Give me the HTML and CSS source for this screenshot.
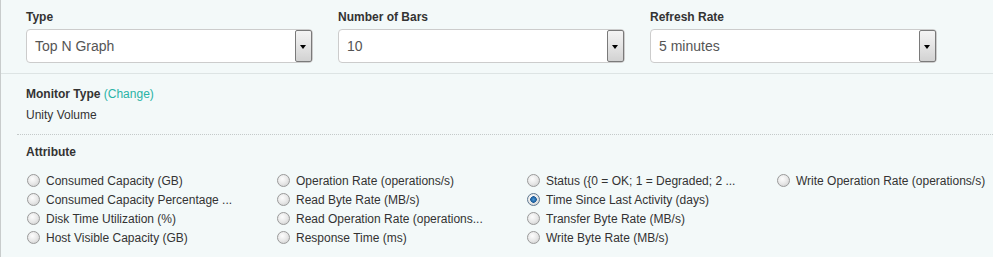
FILE: index.html
```html
<!DOCTYPE html>
<html lang="en">
<head>
    <meta charset="UTF-8">
    <title>Top N Graph Settings</title>
    <link rel="stylesheet" href="styles.css">
</head>
<body>

<div class="widget-settings">

    <!-- Graph options -->
    <div class="settings-row">
        <div class="field">
            <label>Type</label>
            <div class="select-box">
                <span class="select-value">Top N Graph</span>
                <span class="select-arrow"></span>
            </div>
        </div>
        <div class="field">
            <label>Number of Bars</label>
            <div class="select-box">
                <span class="select-value">10</span>
                <span class="select-arrow"></span>
            </div>
        </div>
        <div class="field">
            <label>Refresh Rate</label>
            <div class="select-box">
                <span class="select-value">5 minutes</span>
                <span class="select-arrow"></span>
            </div>
        </div>
    </div>

    <!-- Monitor -->
    <div class="monitor-section">
        <div class="monitor-info">
            <p class="section-title">Monitor Type <a href="#" class="change-link">(Change)</a></p>
            <p class="monitor-name">Unity Volume</p>
        </div>

        <div class="attribute-section">
            <p class="section-title">Attribute</p>
            <div class="attribute-grid">
                <label class="radio-item"><input type="radio" name="attr"><span>Consumed Capacity (GB)</span></label>
                <label class="radio-item"><input type="radio" name="attr"><span>Operation Rate (operations/s)</span></label>
                <label class="radio-item"><input type="radio" name="attr"><span>Status ({0 = OK; 1 = Degraded; 2 ...</span></label>
                <label class="radio-item"><input type="radio" name="attr"><span>Write Operation Rate (operations/s)</span></label>

                <label class="radio-item"><input type="radio" name="attr"><span>Consumed Capacity Percentage ...</span></label>
                <label class="radio-item"><input type="radio" name="attr"><span>Read Byte Rate (MB/s)</span></label>
                <label class="radio-item"><input type="radio" name="attr" checked><span>Time Since Last Activity (days)</span></label>
                <div></div>

                <label class="radio-item"><input type="radio" name="attr"><span>Disk Time Utilization (%)</span></label>
                <label class="radio-item"><input type="radio" name="attr"><span>Read Operation Rate (operations...</span></label>
                <label class="radio-item"><input type="radio" name="attr"><span>Transfer Byte Rate (MB/s)</span></label>
                <div></div>

                <label class="radio-item"><input type="radio" name="attr"><span>Host Visible Capacity (GB)</span></label>
                <label class="radio-item"><input type="radio" name="attr"><span>Response Time (ms)</span></label>
                <label class="radio-item"><input type="radio" name="attr"><span>Write Byte Rate (MB/s)</span></label>
                <div></div>
            </div>
        </div>
    </div>

</div>

</body>
</html>
```

FILE: styles.css
```css
* {
    margin: 0;
    padding: 0;
    box-sizing: border-box;
}

body {
    font-family: "Liberation Sans", Arial, sans-serif;
    font-size: 12px;
    color: #333;
    background-color: #f3f9f9;
    height: 100vh;
    overflow: hidden;
}

.widget-settings {
    border-left: 1px solid #c8cccc;
    min-height: 100vh;
}

/* Top row of selects */
.settings-row {
    display: flex;
    gap: 25px;
    padding: 9px 0 10px 25px;
    border-bottom: 1px solid #dde4e4;
}

.field {
    width: 287px;
}

.field label {
    display: block;
    font-weight: bold;
    line-height: 16px;
    margin-bottom: 4px;
}

.select-box {
    display: flex;
    align-items: center;
    justify-content: space-between;
    height: 34px;
    background-color: #fff;
    border: 1px solid #ccc;
    border-radius: 4px;
    padding: 0 0 0 8px;
}

.select-value {
    font-size: 14px;
    color: #555;
}

.select-arrow {
    position: relative;
    width: 17px;
    height: 32px;
    border: 1px solid #7a7a7a;
    border-radius: 2px;
    background: linear-gradient(to bottom, #f4f4f4 0%, #e6e6e6 45%, #d2d2d2 100%);
}

.select-arrow::after {
    content: "";
    position: absolute;
    left: 4px;
    top: 14px;
    border-left: 3.5px solid transparent;
    border-right: 3.5px solid transparent;
    border-top: 4px solid #000;
}

/* Monitor section */
.monitor-section {
    padding: 0 0 0 16px;
}

.monitor-info {
    padding: 12px 0 11px 9px;
    border-bottom: 1px dotted #c4caca;
}

.section-title {
    font-weight: bold;
    line-height: 16px;
}

.change-link {
    font-weight: normal;
    color: #2ab3a6;
    text-decoration: none;
}

.monitor-name {
    line-height: 16px;
    margin-top: 5px;
}

.attribute-section {
    padding: 9px 0 0 9px;
}

.attribute-grid {
    display: grid;
    grid-template-columns: repeat(4, 250px);
    grid-auto-rows: 19px;
    margin-top: 11px;
}

.radio-item {
    display: flex;
    align-items: center;
    gap: 6px;
    white-space: nowrap;
    color: #333;
}

.radio-item input {
    appearance: none;
    -webkit-appearance: none;
    width: 13px;
    height: 13px;
    margin-left: 1px;
    border-radius: 50%;
    border: 1px solid #9a9a9a;
    background: radial-gradient(circle at 40% 35%, #fdfdfd 0%, #e8e8e8 50%, #c9c9c9 100%);
}

.radio-item input:checked {
    border-color: #5f7890;
    background:
        radial-gradient(circle at 50% 50%, #4a9ad8 0, #1c5a98 3px, transparent 3.5px),
        radial-gradient(circle at 40% 35%, #fdfdfd 0%, #e8e8e8 50%, #c9c9c9 100%);
}
```
